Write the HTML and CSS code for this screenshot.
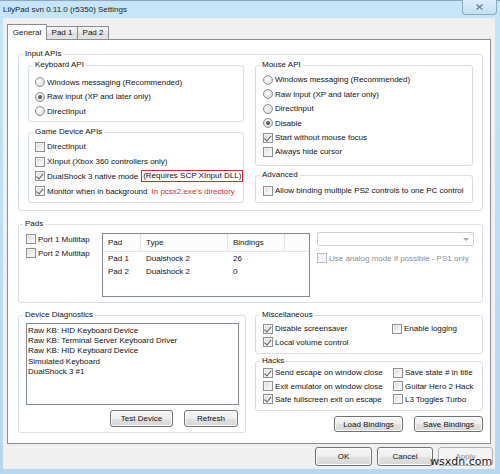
FILE: index.html
```html
<!DOCTYPE html>
<html>
<head>
<meta charset="utf-8">
<title>LilyPad Settings</title>
<link rel="stylesheet" href="styles.css">
</head>
<body>
<div class="window">
  <div class="titlebar">
    <span class="title">LilyPad svn 0.11.0 (r5350) Settings</span>
    <span class="close"><svg width="7" height="6" viewBox="0 0 7 6"><path d="M0.5 0.5 L6.5 5.5 M6.5 0.5 L0.5 5.5" stroke="#6b7f90" stroke-width="1.3" fill="none"/></svg></span>
  </div>
  <div class="client">
    <div class="tabs">
      <div class="tab active">General</div>
      <div class="tab">Pad 1</div>
      <div class="tab">Pad 2</div>
    </div>
    <div class="panel">
      <fieldset class="group g-input">
        <legend>Input APIs</legend>
        <div class="input-cols">
          <div class="col">
            <fieldset class="group g-kb">
              <legend>Keyboard API</legend>
              <div class="rows">
                <div class="opt"><span class="rb"></span>Windows messaging (Recommended)</div>
                <div class="opt"><span class="rb on"></span>Raw input (XP and later only)</div>
                <div class="opt"><span class="rb"></span>DirectInput</div>
              </div>
            </fieldset>
            <fieldset class="group g-game">
              <legend>Game Device APIs</legend>
              <div class="rows">
                <div class="opt"><span class="cb"></span>DirectInput</div>
                <div class="opt"><span class="cb"></span>XInput (Xbox 360 controllers only)</div>
                <div class="opt"><span class="cb on"></span>DualShock 3 native mode<span class="note-box">(Requires SCP XInput DLL)</span></div>
                <div class="opt"><span class="cb on"></span>Monitor when in background<span class="note-red">In pcsx2.exe's directory</span></div>
              </div>
            </fieldset>
          </div>
          <div class="col">
            <fieldset class="group g-mouse">
              <legend>Mouse API</legend>
              <div class="rows">
                <div class="opt"><span class="rb"></span>Windows messaging (Recommended)</div>
                <div class="opt"><span class="rb"></span>Raw input (XP and later only)</div>
                <div class="opt"><span class="rb"></span>DirectInput</div>
                <div class="opt"><span class="rb on"></span>Disable</div>
                <div class="opt"><span class="cb on"></span>Start without mouse focus</div>
                <div class="opt"><span class="cb"></span>Always hide cursor</div>
              </div>
            </fieldset>
            <fieldset class="group g-adv">
              <legend>Advanced</legend>
              <div class="rows">
                <div class="opt"><span class="cb"></span>Allow binding multiple PS2 controls to one PC control</div>
              </div>
            </fieldset>
          </div>
        </div>
      </fieldset>

      <fieldset class="group g-pads">
        <legend>Pads</legend>
        <div class="pads-body">
          <div class="pads-left">
            <div class="opt"><span class="cb"></span>Port 1 Multitap</div>
            <div class="opt"><span class="cb"></span>Port 2 Multitap</div>
          </div>
          <div class="listview">
            <div class="lv-head">
              <div class="lv-h">Pad</div>
              <div class="lv-h">Type</div>
              <div class="lv-h">Bindings</div>
              <div class="lv-h"></div>
            </div>
            <div class="lv-row"><span>Pad 1</span><span>Dualshock 2</span><span>26</span></div>
            <div class="lv-row"><span>Pad 2</span><span>Dualshock 2</span><span>0</span></div>
          </div>
          <div class="pads-right">
            <div class="combo"><span class="combo-arrow"></span></div>
            <div class="opt disabled"><span class="cb"></span>Use analog mode if possible - PS1 only</div>
          </div>
        </div>
      </fieldset>

      <div class="bottom-row">
        <fieldset class="group g-diag">
          <legend>Device Diagnostics</legend>
          <div class="diag-body">
            <div class="listbox">
              <div>Raw KB: HID Keyboard Device</div>
              <div>Raw KB: Terminal Server Keyboard Driver</div>
              <div>Raw KB: HID Keyboard Device</div>
              <div>Simulated Keyboard</div>
              <div>DualShock 3 #1</div>
            </div>
            <div class="btn-row diag-btns">
              <button class="btn b-test">Test Device</button>
              <button class="btn b-refresh">Refresh</button>
            </div>
          </div>
        </fieldset>
        <div class="right-col">
          <fieldset class="group g-misc">
            <legend>Miscellaneous</legend>
            <div class="grid2 misc-grid">
              <div class="opt"><span class="cb on"></span>Disable screensaver</div>
              <div class="opt"><span class="cb"></span>Enable logging</div>
              <div class="opt"><span class="cb on"></span>Local volume control</div>
            </div>
          </fieldset>
          <fieldset class="group g-hacks">
            <legend>Hacks</legend>
            <div class="grid2 hacks-grid">
              <div class="opt"><span class="cb on"></span>Send escape on window close</div>
              <div class="opt"><span class="cb"></span>Save state # in title</div>
              <div class="opt"><span class="cb"></span>Exit emulator on window close</div>
              <div class="opt"><span class="cb"></span>Guitar Hero 2 Hack</div>
              <div class="opt"><span class="cb on"></span>Safe fullscreen exit on escape</div>
              <div class="opt"><span class="cb"></span>L3 Toggles Turbo</div>
            </div>
          </fieldset>
          <div class="btn-row bind-btns">
            <button class="btn b-bind">Load Bindings</button>
            <button class="btn b-bind">Save Bindings</button>
          </div>
        </div>
      </div>
    </div>
    <div class="dialog-buttons">
      <button class="btn b-ok">OK</button>
      <button class="btn b-cancel">Cancel</button>
      <button class="btn b-apply" disabled>Apply</button>
    </div>
  </div>
  <span class="watermark">wsxdn.com</span>
</div>
</body>
</html>
```
FILE: styles.css
```css
* { box-sizing: border-box; }
html, body { margin: 0; padding: 0; }
body {
  width: 500px;
  height: 474px;
  overflow: hidden;
  font-family: "Liberation Sans", Arial, sans-serif;
  font-size: 8px;
  color: #111;
  background: #bfddf2;
}
.window {
  position: relative;
  width: 500px;
  height: 474px;
  display: flex;
  flex-direction: column;
  background: linear-gradient(#c6e5f8, #bcdcf2 60%, #b6d7ef);
  box-shadow: inset 0 1px 0 #8fa6ba;
}
.titlebar {
  height: 18px;
  display: flex;
  justify-content: space-between;
  align-items: flex-start;
  padding-left: 3px;
}
.title {
  line-height: 20px;
  font-size: 8px;
  color: #1b1b1b;
}
.close {
  width: 35px;
  height: 15px;
  margin-right: 3px;
  border: 1px solid #90a7bb;
  border-top: none;
  border-radius: 0 0 4px 4px;
  background: linear-gradient(#dbeffb, #c4e0f3);
  display: flex;
  align-items: center;
  justify-content: center;
}
.client {
  margin: 0 5px 5px 3px;
  height: 451px;
  background: #f0f0f0;
  padding: 6px 4px 3px 4px;
  display: flex;
  flex-direction: column;
}
.tabs {
  display: flex;
  align-items: flex-end;
  height: 15px;
}
.tab {
  height: 13px;
  width: 32px;
  margin-left: -1px;
  border: 1px solid #898c95;
  border-bottom: none;
  background: linear-gradient(#f4f4f4, #e9e9e9 50%, #dcdcdc 50%, #e4e4e4);
  text-align: center;
  line-height: 12px;
}
.tab.active {
  width: 40px;
  height: 16px;
  margin-left: 0;
  margin-bottom: -1px;
  background: #fff;
  position: relative;
  z-index: 1;
  line-height: 15px;
}
.panel {
  height: 405px;
  border: 1px solid #898c95;
  background: #fff;
  padding: 9px 7px 0 10px;
}
.group {
  margin: 0;
  padding: 0;
  min-width: 0;
  border: 1px solid #d5dfe5;
  border-radius: 3px;
}
.group > legend {
  padding: 0 2px;
  margin-left: 4px;
  height: 10px;
  line-height: 10px;
  color: #111;
}
.opt {
  display: flex;
  align-items: center;
  gap: 2px;
  white-space: nowrap;
}
.rows .opt { height: 14.4px; }
.rb, .cb {
  flex: none;
  width: 10px;
  height: 10px;
  border: 1px solid #8e8f8f;
  display: flex;
  align-items: center;
  justify-content: center;
}
.rb {
  border-radius: 50%;
  background: radial-gradient(circle at 40% 40%, #ffffff, #e2e2e2 60%, #cfcfcf);
}
.rb.on::after {
  content: "";
  width: 4px;
  height: 4px;
  border-radius: 50%;
  background: radial-gradient(circle at 40% 40%, #777, #2f2f2f);
}
.cb {
  background: linear-gradient(135deg, #d2d4d6, #f2f2f2 60%, #fdfdfd);
  box-shadow: inset 0 0 0 1px #f5f5f5;
}
.cb.on::after {
  content: "";
  width: 2.5px;
  height: 5.5px;
  margin-top: -1.5px;
  border-right: 1.2px solid #5a5e64;
  border-bottom: 1.2px solid #5a5e64;
  transform: rotate(40deg);
}
.opt.disabled { color: #8d8d8d; }
.opt.disabled .cb {
  border-color: #bcbcbc;
  background: #f6f6f6;
  box-shadow: none;
}

/* Input APIs */
.g-input { height: 162px; }
.input-cols {
  display: grid;
  grid-template-columns: 216px 218px;
  column-gap: 11px;
  padding: 1px 9px 0 9px;
}
.col { display: flex; flex-direction: column; }
.g-kb { height: 62px; }
.g-kb .rows { padding: 4.8px 0 0 6px; }
.g-kb .rows .opt { height: 14.5px; }
.g-game { height: 76px; margin-top: 5px; }
.g-game .rows { padding: 2.6px 0 0 6px; }
.g-game .rows .opt { height: 14.7px; }
.g-mouse { height: 106px; }
.g-mouse .rows { padding: 2.8px 0 0 7px; }
.g-adv { height: 33px; margin-top: 4px; }
.g-adv .rows { padding: 3.8px 0 0 7px; }
.note-box {
  margin-left: 1px;
  border: 1px solid #e0242c;
  padding: 0 1px;
  height: 12px;
  line-height: 10px;
}
.note-red {
  margin-left: 2px;
  color: #e8262e;
}

/* Pads */
.g-pads { height: 84px; margin-top: 8px; }
.pads-body {
  display: flex;
  align-items: flex-start;
  padding: 4px 0 0 7px;
}
.pads-left { width: 76px; margin-top: -1.2px; }
.pads-left .opt { height: 14.4px; }
.listview {
  width: 208px;
  height: 64px;
  border: 1px solid #828790;
  background: #fff;
}
.lv-head {
  display: grid;
  grid-template-columns: 38px 87px 57px 1fr;
  height: 18px;
  border-bottom: 1px solid #e5e5e5;
}
.lv-h {
  padding-left: 5px;
  line-height: 17px;
  border-right: 1px solid #e5e5e5;
  background: linear-gradient(#ffffff, #fafbfc);
}
.lv-h:last-child { border-right: none; }
.lv-row {
  display: grid;
  grid-template-columns: 38px 87px 57px;
  height: 13px;
  line-height: 13px;
}
.lv-row span { padding-left: 5px; }
.pads-right {
  margin-left: 7px;
  width: 157px;
  margin-top: -1px;
}
.combo {
  height: 14px;
  border: 1px solid #cfcfcf;
  border-radius: 2px;
  background: #fff;
  display: flex;
  align-items: center;
  justify-content: flex-end;
  padding-right: 4px;
}
.combo-arrow {
  width: 0;
  height: 0;
  border-left: 3px solid transparent;
  border-right: 3px solid transparent;
  border-top: 3px solid #a6a6a6;
}
.pads-right .opt { height: 14px; margin-top: 5px; }

/* Bottom row */
.bottom-row {
  display: flex;
  margin-top: 7px;
}
.g-diag { width: 228px; height: 123px; }
.diag-body { padding: 3px 6px 0 7px; }
.listbox {
  width: 213px;
  height: 82px;
  border: 1px solid #828790;
  background: #fff;
  padding: 1.6px 2px 0 1px;
  line-height: 10.4px;
}
.btn-row {
  display: flex;
  justify-content: flex-end;
  gap: 11px;
}
.diag-btns { margin-top: 5px; padding-right: 1px; }
.btn {
  font: inherit;
  color: #111;
  padding: 0;
  border: 1px solid #707070;
  border-radius: 3px;
  background: linear-gradient(#f5f5f5, #eeeeee 50%, #e2e2e2 50%, #d6d6d6);
  box-shadow: inset 0 0 0 1px #fbfbfb;
  display: flex;
  align-items: center;
  justify-content: center;
}
.b-test { width: 63px; height: 17px; }
.b-refresh { width: 54px; height: 17px; }
.right-col {
  margin-left: 9px;
  width: 228px;
  display: flex;
  flex-direction: column;
}
.g-misc { height: 44px; }
.g-hacks { height: 55px; margin-top: 2px; }
.grid2 {
  display: grid;
  grid-template-columns: 130px 1fr;
  padding-left: 7px;
}
.grid2 .opt { height: 13.4px; }
.misc-grid { grid-template-columns: 129px 1fr; padding-top: 2.3px; }
.hacks-grid { padding-top: 0; }
.bind-btns { margin-top: 5px; }
.b-bind { width: 69px; height: 16px; }
.dialog-buttons {
  display: flex;
  justify-content: flex-end;
  gap: 5px;
  margin-top: 3px;
  margin-right: -2px;
}
.dialog-buttons .btn { height: 19px; }
.b-ok { width: 57px; }
.b-cancel { width: 56px; }
.b-apply {
  width: 55px;
  color: #8a8a8a;
  border-color: #b0b4b7;
  background: #f4f4f4;
  box-shadow: none;
}
.watermark {
  position: absolute;
  left: 430px;
  top: 455px;
  font-family: "DejaVu Sans", sans-serif;
  font-size: 11px;
  color: #1a1a1a;
}
```
